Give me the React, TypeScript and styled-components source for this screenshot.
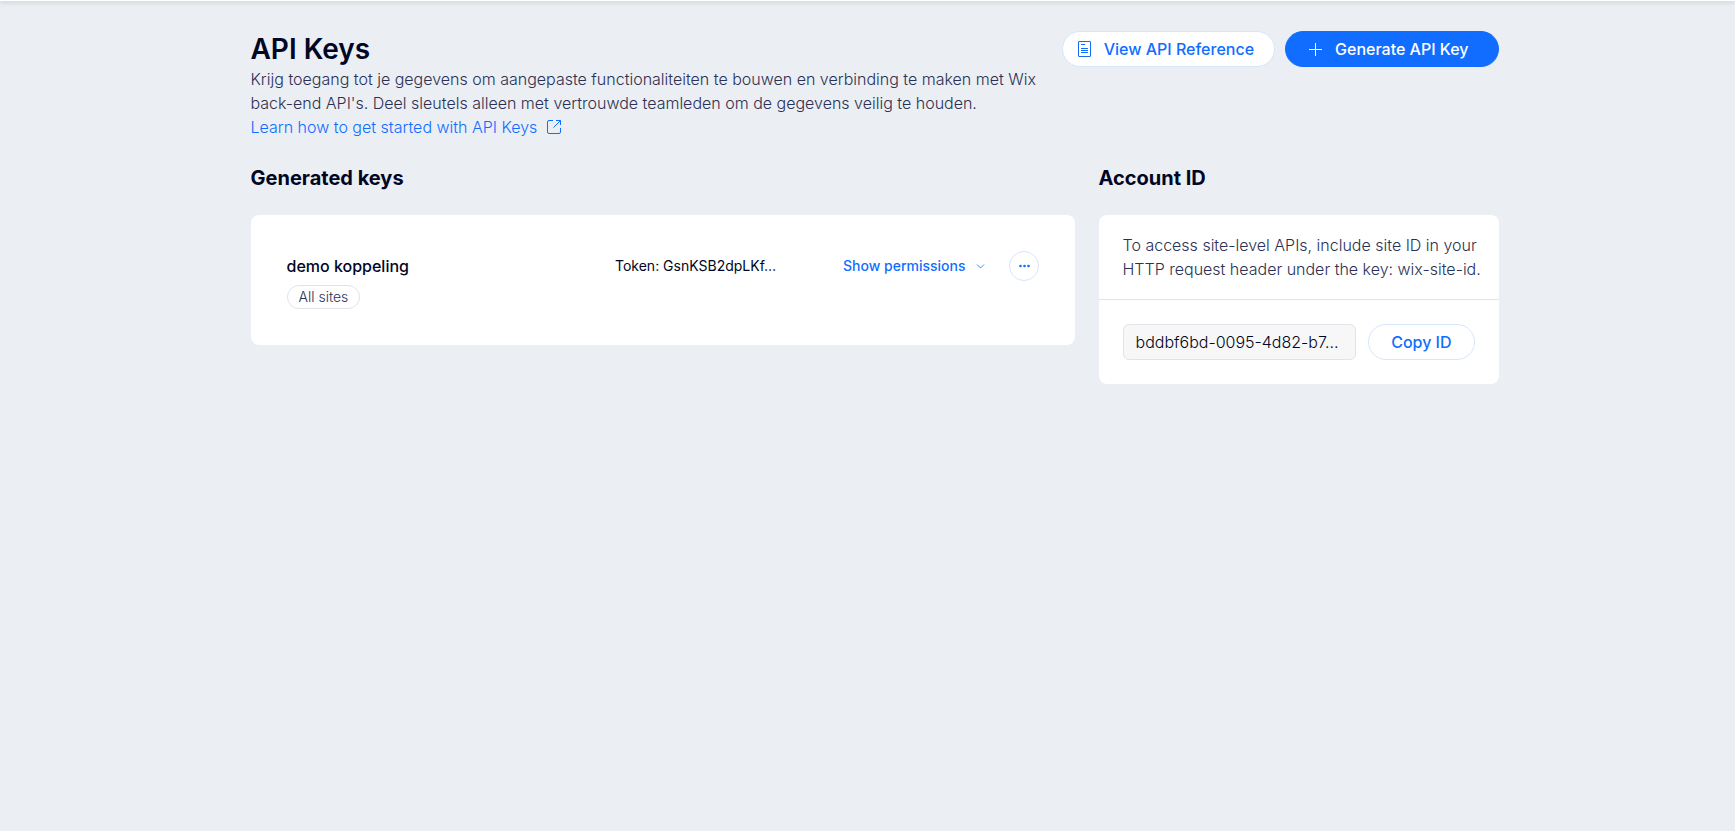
import React from 'react';
import styled, { createGlobalStyle, css } from 'styled-components';

const color = {
  page: '#ebeef3',
  heading: '#000624',
  text: '#2b3154',
  blue: '#116dff',
  paleBlue: '#d6e6fe',
  border: '#dfe3eb',
};

const GlobalStyle = createGlobalStyle`
  *, *::before, *::after { box-sizing: border-box; }
  body {
    margin: 0;
    background: ${color.page};
    color: ${color.text};
    font: 300 16px/24px Inter, 'Open Sans', sans-serif;
    -webkit-font-smoothing: antialiased;
  }
  h1, h2, h3, p { margin: 0; }
  button, input { font: inherit; }
`;

const TopBar = styled.div`
  height: 1px;
  background: #fff;
  box-shadow: 0 1px 4px rgba(22, 45, 61, 0.4);
`;

const Page = styled.main`
  max-width: 1296px;
  margin: 0 auto;
  padding: 30px 17px 48px 31px;
`;

const Header = styled.header`
  display: flex;
  align-items: flex-start;
  justify-content: space-between;
  gap: 16px;
`;

const Intro = styled.div`
  flex: 0 1 796px;
`;

const Title = styled.h1`
  color: ${color.heading};
  font-size: 28px;
  font-weight: 600;
  line-height: 36px;
`;

const DocsLink = styled.a`
  display: inline-flex;
  align-items: center;
  gap: 10px;
  color: ${color.blue};
  text-decoration: none;
`;

const Actions = styled.div`
  display: flex;
  flex: none;
  gap: 10px;
`;

const Button = styled.button<{ $primary?: boolean; $compact?: boolean }>`
  display: inline-flex;
  align-items: center;
  justify-content: center;
  gap: 12px;
  height: 36px;
  padding: 0 ${(p) => (p.$primary ? 29 : 20)}px 0 ${(p) => (p.$primary ? 23 : 15)}px;
  border: 1px solid ${(p) => (p.$primary ? color.blue : color.paleBlue)};
  border-radius: 18px;
  background: ${(p) => (p.$primary ? color.blue : '#fff')};
  color: ${(p) => (p.$primary ? '#fff' : color.blue)};
  font-weight: 500;
  white-space: nowrap;
  cursor: pointer;
  ${(p) =>
    p.$compact &&
    css`
      padding: 0 22px;
    `}
`;

const Columns = styled.div`
  display: grid;
  grid-template-columns: minmax(0, 824fr) minmax(0, 400fr);
  align-items: start;
  gap: 24px;
  margin-top: 27px;
`;

const SectionTitle = styled.h2`
  margin-bottom: 25px;
  color: ${color.heading};
  font-size: 20px;
  font-weight: 700;
  line-height: 24px;
`;

const Card = styled.div`
  border-radius: 8px;
  background: #fff;
`;

const KeyRow = styled(Card)`
  display: grid;
  grid-template-columns: minmax(0, 1fr) 204px auto 30px;
  align-items: start;
  column-gap: 24px;
  padding: 36px;
`;

const KeyInfo = styled.div`
  display: flex;
  flex-direction: column;
  align-items: flex-start;
  gap: 4px;
`;

const KeyName = styled.h3`
  color: ${color.heading};
  font-size: 16px;
  font-weight: 500;
  line-height: 30px;
`;

const Tag = styled.span`
  padding: 0 11px;
  border: 1px solid ${color.border};
  border-radius: 12px;
  font-size: 14px;
  line-height: 22px;
`;

const Token = styled.span`
  color: ${color.heading};
  font-size: 14px;
  font-weight: 400;
  line-height: 30px;
  white-space: nowrap;
`;

const TextButton = styled.button`
  display: inline-flex;
  align-items: center;
  gap: 10px;
  height: 30px;
  padding: 0;
  border: 0;
  background: none;
  color: ${color.blue};
  font-size: 14px;
  font-weight: 500;
  white-space: nowrap;
  cursor: pointer;
`;

const RoundButton = styled.button`
  display: grid;
  place-items: center;
  width: 30px;
  height: 30px;
  padding: 0;
  border: 1px solid ${color.paleBlue};
  border-radius: 50%;
  background: #fff;
  color: ${color.blue};
  cursor: pointer;
`;

const CardNote = styled.p`
  padding: 18px 16px 18px 24px;
  border-bottom: 1px solid ${color.border};
`;

const CardForm = styled.div`
  display: flex;
  gap: 12px;
  padding: 24px;
`;

const IdField = styled.input`
  flex: 1;
  min-width: 0;
  height: 36px;
  padding: 0 12px;
  border: 1px solid ${color.border};
  border-radius: 6px;
  background: #f7f7f7;
  color: ${color.heading};
  text-overflow: ellipsis;
`;

const Icon = styled.svg`
  display: block;
  flex: none;
  fill: none;
  stroke: currentColor;
`;

const DocumentIcon = () => (
  <Icon width="14" height="16" viewBox="0 0 14 16" aria-hidden="true">
    <rect x="0.5" y="0.5" width="12" height="15" rx="0.5" />
    <path d="M3 3.5h4M3 7.5h7M3 9.5h7M3 11.5h7" />
  </Icon>
);

const PlusIcon = () => (
  <Icon width="14" height="14" viewBox="0 0 14 14" aria-hidden="true">
    <path d="M0 7.5h13M6.5 1v13" />
  </Icon>
);

const ExternalIcon = () => (
  <Icon width="14" height="14" viewBox="0 0 14 14" aria-hidden="true">
    <path d="M6 .5H2A1.5 1.5 0 0 0 .5 2v10A1.5 1.5 0 0 0 2 13.5h10a1.5 1.5 0 0 0 1.5-1.5V8M9 .5h4.500V5M13.500.5L6.500 7.500" />
  </Icon>
);

const ChevronIcon = () => (
  <Icon width="9" height="12" viewBox="0 0 9 12" aria-hidden="true">
    <path d="M1 4.500L4.500 8L8 4.500" strokeOpacity="0.8" />
  </Icon>
);

const DotsIcon = () => (
  <Icon width="12" height="4" viewBox="0 0 12 4" aria-hidden="true">
    <g fill="currentColor" stroke="none">
      <circle cx="2.500" cy="2" r="1.300" />
      <circle cx="6.500" cy="2" r="1.300" />
      <circle cx="10.500" cy="2" r="1.300" />
    </g>
  </Icon>
);

export default function App() {
  return (
    <>
      <GlobalStyle />
      <TopBar />
      <Page>
        <Header>
          <Intro>
            <Title>API Keys</Title>
            <p>
              Krijg toegang tot je gegevens om aangepaste functionaliteiten te bouwen en verbinding te
              maken met Wix back-end API's. Deel sleutels alleen met vertrouwde teamleden om de gegevens
              veilig te houden.
            </p>
            <DocsLink href="#get-started">
              Learn how to get started with API Keys
              <ExternalIcon />
            </DocsLink>
          </Intro>
          <Actions>
            <Button type="button">
              <DocumentIcon />
              View API Reference
            </Button>
            <Button type="button" $primary>
              <PlusIcon />
              Generate API Key
            </Button>
          </Actions>
        </Header>

        <Columns>
          <section>
            <SectionTitle>Generated keys</SectionTitle>
            <KeyRow>
              <KeyInfo>
                <KeyName>demo koppeling</KeyName>
                <Tag>All sites</Tag>
              </KeyInfo>
              <Token>Token: GsnKSB2dpLKf…</Token>
              <TextButton type="button" aria-expanded="false">
                Show permissions
                <ChevronIcon />
              </TextButton>
              <RoundButton type="button" aria-label="More actions">
                <DotsIcon />
              </RoundButton>
            </KeyRow>
          </section>

          <section>
            <SectionTitle id="account-id">Account ID</SectionTitle>
            <Card>
              <CardNote>
                To access site-level APIs, include site ID in your HTTP request header under the key:
                wix-site-id.
              </CardNote>
              <CardForm>
                <IdField aria-labelledby="account-id" readOnly value="bddbf6bd-0095-4d82-b7…" />
                <Button type="button" $compact>
                  Copy ID
                </Button>
              </CardForm>
            </Card>
          </section>
        </Columns>
      </Page>
    </>
  );
}
